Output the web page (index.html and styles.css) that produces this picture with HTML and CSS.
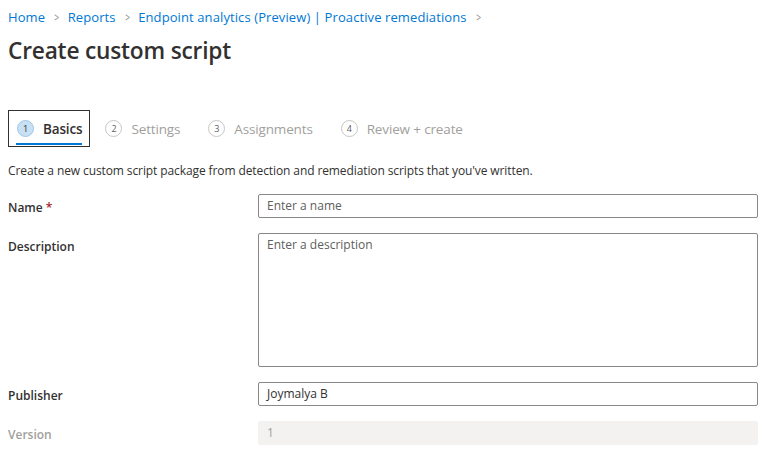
FILE: index.html
```
<!DOCTYPE html>
<html>
<head>
<meta charset="utf-8">
<link rel="stylesheet" href="styles.css">
</head>
<body>
<div class="page">
  <nav class="crumbs">
    <a>Home</a><span class="sep">&gt;</span>
    <a>Reports</a><span class="sep">&gt;</span>
    <a>Endpoint analytics (Preview) | Proactive remediations</a><span class="sep">&gt;</span>
  </nav>
  <h1 class="title">Create custom script</h1>
  <div class="steps">
    <div class="step active"><span class="num">1</span><span class="label">Basics</span></div>
    <div class="step"><span class="num">2</span><span class="label">Settings</span></div>
    <div class="step"><span class="num">3</span><span class="label">Assignments</span></div>
    <div class="step"><span class="num">4</span><span class="label">Review + create</span></div>
  </div>
  <p class="intro">Create a new custom script package from detection and remediation scripts that you've written.</p>
  <div class="form">
    <div class="row"><label class="lbl">Name <span class="req">*</span></label><div class="field">Enter a name</div></div>
    <div class="row"><label class="lbl">Description</label><div class="field area">Enter a description</div></div>
    <div class="row"><label class="lbl">Publisher</label><div class="field value">Joymalya B</div></div>
    <div class="row"><label class="lbl dis">Version</label><div class="field disabled">1</div></div>
  </div>
</div>
</body>
</html>
```
FILE: styles.css
```
* { box-sizing: border-box; }
html, body { margin: 0; background: #fff; }
body { font-family: "Open Sans", "Noto Sans", sans-serif; color: #323130; font-size: 12px; }
.page { padding: 0 10px 0 8px; }
.crumbs { display: flex; align-items: center; height: 18px; margin-top: 8px; font-size: 13px; letter-spacing: 0.1px; }
.crumbs a { color: #0078d4; }
.crumbs .sep { color: #8a8886; margin: 0 7px 0 8px; font-size: 13px; transform: scaleX(0.65); display: inline-block; }
.title { margin: 10px 0 0; font-size: 22.7px; font-weight: 600; letter-spacing: -0.2px; line-height: 30px; height: 30px; }
.steps { display: flex; margin-top: 44px; height: 37px; align-items: stretch; }
.step { display: flex; align-items: center; padding: 0 8px; margin-right: 12px; color: #a19f9d; font-size: 13.5px; position: relative; letter-spacing: -0.15px; }
.step .num { width: 17px; height: 17px; border-radius: 50%; border: 1px solid #c8c6c4; font-size: 9px; display: flex; align-items: center; justify-content: center; margin-right: 9px; color: #605e5c; }
.step.active { border: 1px solid #323130; padding: 0 7px 0 8px; margin-right: 7px; color: #323130; font-weight: 600; }
.step.active .num { background: #c7e0f4; border-color: #9fc6e8; color: #323130; font-weight: 400; }
.step.active::after { content: ""; position: absolute; left: 7px; right: 7px; bottom: 1px; height: 2px; background: #0078d4; }
.intro { margin: 16px 0 0; font-size: 12px; letter-spacing: -0.1px; line-height: 16px; }
.form { margin-top: 15px; }
.row { display: flex; margin-bottom: 15px; }
.lbl { width: 250px; font-weight: 600; font-size: 12px; padding-top: 5px; }
.lbl.dis { color: #a19f9d; }
.req { color: #a4262c; }
.field { flex: 1; height: 24px; border: 1px solid #8a8886; border-radius: 2px; padding: 3px 8px; color: #605e5c; font-size: 12px; line-height: 16px; }
.field.area { height: 134px; }
.field.value { color: #323130; }
.field.disabled { border-color: #f3f2f1; background: #f3f2f1; color: #a19f9d; }
```
